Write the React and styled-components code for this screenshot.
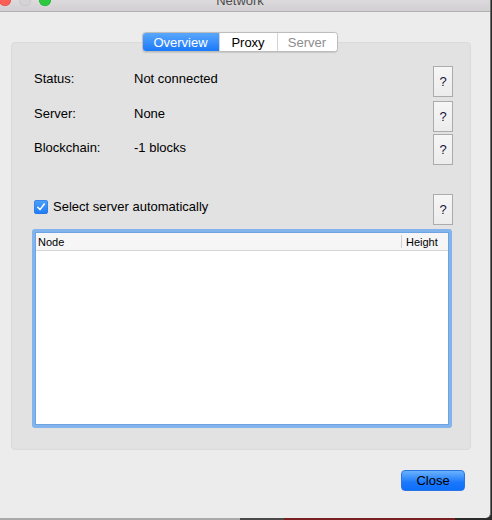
import styled, { createGlobalStyle } from "styled-components";

const Global = createGlobalStyle`
  html, body {
    margin: 0;
    padding: 0;
    background: #3b3b3d;
  }
  body {
    font-family: "Liberation Sans", Arial, Helvetica, sans-serif;
    font-size: 13px;
    color: #000;
  }
`;

const Screen = styled.div`
  width: 492px;
  height: 520px;
  overflow: hidden;
  background: linear-gradient(to right, #a9a9ab 0, #a9a9ab 240px, #4a4a4a 240px, #4a4a4a 284px, #7a1f1f 284px, #7a1f1f 455px, #2a2a2a 455px);
`;

const Window = styled.div`
  width: 490px;
  height: 518px;
  background: #ececec;
  border-right: 1px solid #6e6e6e;
  border-bottom-right-radius: 5px;
  display: flex;
  flex-direction: column;
  overflow: hidden;
`;

const TitleBar = styled.div`
  height: 11px;
  flex: none;
  background: linear-gradient(#dcdadc, #d1cfd1);
  border-bottom: 1px solid #b1b1b1;
  display: flex;
  align-items: flex-start;
  position: relative;
  overflow: hidden;
`;

const Lights = styled.div`
  display: flex;
  gap: 8px;
  margin-left: -1px;
  margin-top: -6px;
`;

const Light = styled.span`
  width: 12px;
  height: 12px;
  border-radius: 50%;
  background: ${(p) => p.$color};
  box-shadow: inset 0 0 0 0.5px ${(p) => p.$edge};
`;

const Title = styled.div`
  position: absolute;
  left: 0;
  right: 0;
  top: -7px;
  text-align: center;
  padding-right: 10px;
  font-size: 13px;
  line-height: 15px;
  color: #4d4d4d;
`;

const Body = styled.div`
  flex: 1;
  display: flex;
  flex-direction: column;
  padding: 20px 19px 0 11px;
`;

const TabsRow = styled.div`
  display: flex;
  justify-content: center;
  padding-right: 3px;
  position: relative;
  z-index: 1;
`;

const Segmented = styled.div`
  display: flex;
  height: 18px;
  border: 1px solid #bdbdbd;
  border-radius: 4px;
  background: #fff;
  overflow: hidden;
  box-shadow: 0 0.5px 1px rgba(0, 0, 0, 0.12);
`;

const Segment = styled.div`
  width: ${(p) => p.$w}px;
  display: flex;
  align-items: center;
  justify-content: center;
  font-size: 13px;
  color: ${(p) => (p.$active ? "#fff" : p.$disabled ? "#8c8c8c" : "#000")};
  background: ${(p) => (p.$active ? "linear-gradient(#5aa7fc, #1b79f9)" : "#fff")};
  & + & {
    border-left: 1px solid ${(p) => (p.$active ? "transparent" : "#d4d4d4")};
  }
`;

const Group = styled.div`
  margin-top: -10px;
  height: 408px;
  box-sizing: border-box;
  background: #e2e2e2;
  border: 1px solid #dadada;
  border-radius: 4px;
  padding: 23px 17px 0 22px;
  display: flex;
  flex-direction: column;
`;

const InfoRow = styled.div`
  display: flex;
  align-items: flex-start;
  height: 31px;
  margin-top: ${(p) => p.$gap || 0}px;
`;

const Label = styled.div`
  width: 100px;
  padding-top: ${(p) => p.$pt || 5}px;
  line-height: 15px;
`;

const Value = styled.div`
  flex: 1;
  padding-top: ${(p) => p.$pt || 5}px;
  line-height: 15px;
`;

const HelpButton = styled.div`
  width: 18px;
  height: 29px;
  border: 1px solid #ababab;
  background: linear-gradient(#f6f6f6, #ececec);
  display: flex;
  align-items: center;
  justify-content: center;
  font-size: 13px;
  color: #14163a;
  flex: none;
`;

const CheckRow = styled.div`
  display: flex;
  align-items: center;
  height: 31px;
  margin-top: 29px;
`;

const CheckLabel = styled.label`
  flex: 1;
  display: flex;
  align-items: center;
  gap: 5px;
  margin-top: -6px;
  font-size: 13px;
`;

const Box = styled.span`
  width: 14px;
  height: 14px;
  border-radius: 3px;
  background: linear-gradient(#4da0fa, #1f7cf6);
  display: flex;
  align-items: center;
  justify-content: center;
  box-shadow: inset 0 0 0 0.5px #2a72d8;
`;

const Table = styled.div`
  margin-top: 4px;
  width: 420px;
  height: 199px;
  box-sizing: border-box;
  border: 3px solid #83b4ec;
  border-radius: 3px;
  background: #fff;
  margin-left: -2px;
  display: flex;
  flex-direction: column;
  box-shadow: inset 0 0 0 1px #6ea4e4;
`;

const Header = styled.div`
  display: flex;
  height: 17px;
  background: #f6f6f6;
  border-bottom: 1px solid #d6d6d6;
  font-size: 11px;
  margin: 1px 1px 0;
`;

const HeadCell = styled.div`
  display: flex;
  align-items: center;
  padding-left: ${(p) => p.$pl}px;
  flex: ${(p) => (p.$grow ? 1 : "none")};
  width: ${(p) => (p.$w ? `${p.$w}px` : "auto")};
  border-left: ${(p) => (p.$sep ? "1px solid #d0d0d0" : "none")};
  margin: ${(p) => (p.$sep ? "2px 0" : "0")};
`;

const Footer = styled.div`
  display: flex;
  justify-content: flex-end;
  padding-top: 20px;
  padding-right: 6px;
`;

const CloseButton = styled.button`
  width: 64px;
  height: 21px;
  border: 1px solid #2a74e8;
  border-radius: 4px;
  background: linear-gradient(#6ab2fc, #1a78fb 60%, #0d6efa);
  font-family: inherit;
  font-size: 13px;
  color: #000;
  padding: 0;
`;

const rows = [
  { label: "Status:", value: "Not connected", gap: 0, pt: 5 },
  { label: "Server:", value: "None", gap: 4, pt: 5 },
  { label: "Blockchain:", value: "-1 blocks", gap: 2, pt: 6 },
];

export default function App() {
  return (
    <Screen>
      <Global />
      <Window>
        <TitleBar>
          <Lights>
            <Light $color="#fc5f57" $edge="#e0443e" />
            <Light $color="#d5d4d5" $edge="#bdbcbd" />
            <Light $color="#2bc840" $edge="#1aab29" />
          </Lights>
          <Title>Network</Title>
        </TitleBar>
        <Body>
          <TabsRow>
            <Segmented>
              <Segment $w={76} $active>Overview</Segment>
              <Segment $w={57}>Proxy</Segment>
              <Segment $w={59} $disabled>Server</Segment>
            </Segmented>
          </TabsRow>
          <Group>
            {rows.map((r) => (
              <InfoRow key={r.label} $gap={r.gap}>
                <Label $pt={r.pt}>{r.label}</Label>
                <Value $pt={r.pt}>{r.value}</Value>
                <HelpButton>?</HelpButton>
              </InfoRow>
            ))}
            <CheckRow>
              <CheckLabel>
                <Box>
                  <svg width="10" height="10" viewBox="0 0 10 10">
                    <path d="M1.8 5.2 L4 7.6 L8.3 2" fill="none" stroke="#fff" strokeWidth="1.5" strokeLinecap="round" strokeLinejoin="round" />
                  </svg>
                </Box>
                Select server automatically
              </CheckLabel>
              <HelpButton>?</HelpButton>
            </CheckRow>
            <Table>
              <Header>
                <HeadCell $grow $pl={2}>Node</HeadCell>
                <HeadCell $sep $w={42} $pl={4}>Height</HeadCell>
              </Header>
            </Table>
          </Group>
          <Footer>
            <CloseButton>Close</CloseButton>
          </Footer>
        </Body>
      </Window>
    </Screen>
  );
}
